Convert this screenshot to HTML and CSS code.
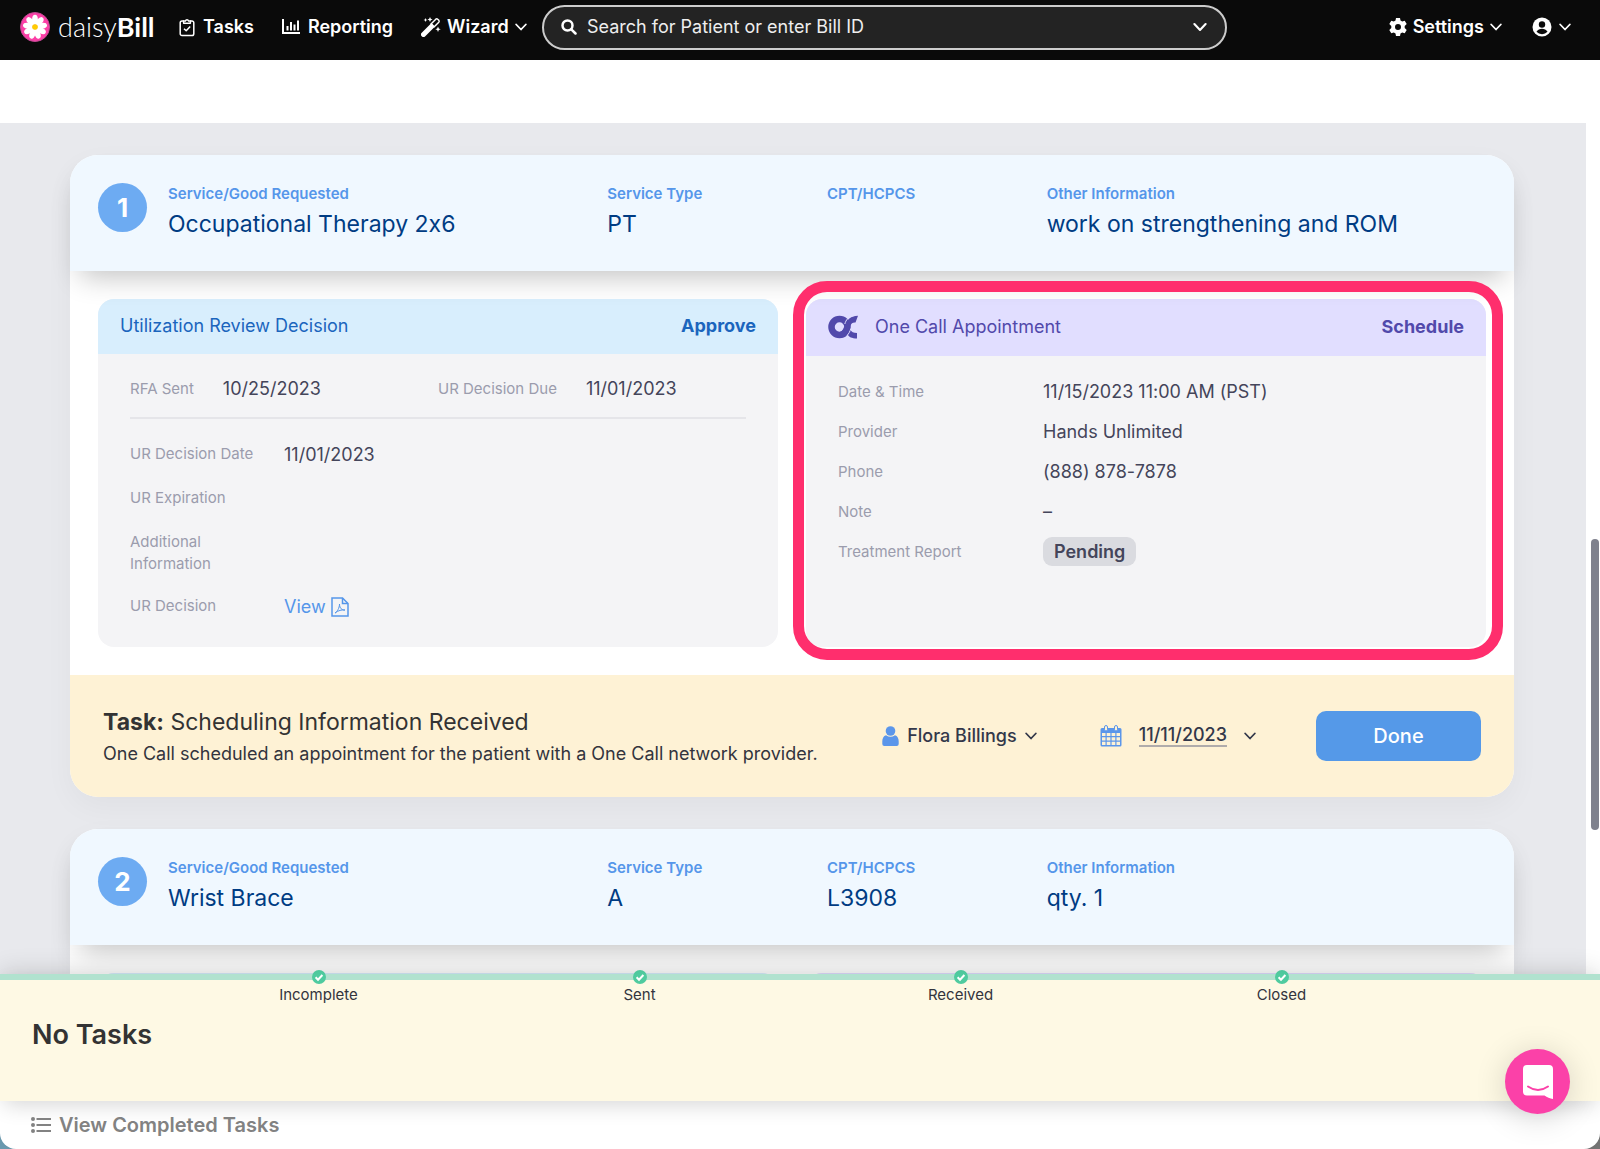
FILE: index.html
```html
<!DOCTYPE html>
<html lang="en">
<head>
  <meta charset="UTF-8" />
  <meta name="viewport" content="width=device-width, initial-scale=1.0"/>
  <title>daisyBill</title>
  <link rel="stylesheet" href="styles.css">
</head>
<body>
  <svg width="0" height="0" class="defs" aria-hidden="true">
    <symbol id="chevron" viewBox="0 0 12 12"><path d="M1.200 3.500 6 8.500l4.800-5" fill="none" stroke="currentColor" stroke-width="1.800" stroke-linecap="round" stroke-linejoin="round"/></symbol>
    <symbol id="check" viewBox="0 0 14 14"><circle cx="7" cy="7" r="7" fill="#4fcb9f"/><path d="M3.600 7.300 6 9.700l4.400-4.700" fill="none" stroke="#fff" stroke-width="2"/></symbol>
  </svg>

  <div class="app">
    <header class="navbar">
      <a href="#" class="brand">
        <svg class="brand-mark" viewBox="0 0 30 30">
          <circle cx="15" cy="15" r="14.500" fill="#fb3fa6" stroke="#c14a93"/>
          <g fill="#fff">
            <ellipse id="petal" cx="15" cy="7.800" rx="2.900" ry="5"/>
            <use href="#petal" transform="rotate(40 15 15)"/>
            <use href="#petal" transform="rotate(80 15 15)"/>
            <use href="#petal" transform="rotate(120 15 15)"/>
            <use href="#petal" transform="rotate(160 15 15)"/>
            <use href="#petal" transform="rotate(200 15 15)"/>
            <use href="#petal" transform="rotate(240 15 15)"/>
            <use href="#petal" transform="rotate(280 15 15)"/>
            <use href="#petal" transform="rotate(320 15 15)"/>
          </g>
          <circle cx="15" cy="15" r="2.800" fill="#fc0"/>
        </svg>
        <span class="brand-name">daisy<b>Bill</b></span>
      </a>
      <nav class="nav-links">
        <a href="#" class="nav-link nav-tasks">
          <svg width="16" height="20" viewBox="0 0 16 20" fill="none" stroke="#fff" stroke-width="1.500" stroke-linejoin="round"><path d="M5 4H3a1.800 1.800 0 0 0-1.800 1.800v11A1.800 1.800 0 0 0 3 18.600h10a1.800 1.800 0 0 0 1.800-1.800v-11A1.800 1.800 0 0 0 13 4h-2"/><path d="M4.600 6.300V4h1.800a1.700 1.700 0 0 1 3.200 0h1.800v2.300z"/><path d="m5 11.700 2.200 2.100 4-4.200"/></svg>
          Tasks
        </a>
        <a href="#" class="nav-link nav-reporting">
          <svg width="18" height="16" viewBox="0 0 18 16" fill="none" stroke="#fff" stroke-width="2"><path d="M1 0v14h17M5.500 7v4.500M9 3v8.500M12.500 5.500v6M16 1.500v10"/></svg>
          Reporting
        </a>
        <a href="#" class="nav-link nav-wizard">
          <svg width="20" height="20" viewBox="0 0 20 20"><path d="M2.500 17.500 10.500 9.500" stroke="#fff" stroke-width="5" stroke-linecap="round"/><path d="m10 7 4.800-4.800q1-.8 1.900 0l1.100 1.100q.8 1 0 1.900L13 10z" fill="none" stroke="#fff" stroke-width="1.500"/><path d="m9 0 .8 1.700 1.700.8-1.700.8L9 5l-.8-1.700-1.700-.8 1.700-.8zM17 9.500l.8 1.900 1.900.8-1.900.8-.8 1.900-.8-1.900-1.900-.8 1.900-.8zM4.500 1l.6 1.400 1.400.6-1.400.6L4.500 5l-.6-1.400L2.500 3l1.400-.6z" fill="#fff"/></svg>
          Wizard
          <svg class="chev" width="12" height="12"><use href="#chevron"/></svg>
        </a>
      </nav>
      <form class="search">
        <svg width="16" height="16" viewBox="0 0 16 16" fill="none" stroke="#fff" stroke-width="2.500" stroke-linecap="round"><circle cx="6.500" cy="6.500" r="5"/><path d="m10.300 10.300 4.200 4.200"/></svg>
        <input type="text" placeholder="Search for Patient or enter Bill ID" aria-label="Search for Patient or enter Bill ID">
        <button type="button" class="icon-button" aria-label="Search options"><svg width="14" height="14"><use href="#chevron"/></svg></button>
      </form>
      <div class="nav-account">
        <a href="#" class="nav-link nav-settings">
          <svg width="18" height="20" viewBox="0 0 18 20"><path fill="#fff" fill-rule="evenodd" d="M7 1h4l.5 2.600 1.700 1 2.500-.9 2 3.400-2 1.800v2.200l2 1.800-2 3.400-2.500-.9-1.700 1L11 19H7l-.5-2.600-1.700-1-2.500.9-2-3.400 2-1.800V8.900l-2-1.800 2-3.400 2.500.9 1.700-1zM9 7a3 3 0 1 0 0 6 3 3 0 0 0 0-6z"/></svg>
          Settings
          <svg class="chev" width="12" height="12"><use href="#chevron"/></svg>
        </a>
        <button type="button" class="icon-button user-button" aria-label="Account">
          <svg width="20" height="20" viewBox="0 0 20 20"><circle cx="10" cy="10" r="9.500" fill="#fff"/><circle cx="10" cy="7.500" r="3.200" fill="#0a0a0a"/><path d="M4.500 14.800a6.400 6.400 0 0 1 11 0 7.500 7.500 0 0 1-11 0z" fill="#0a0a0a"/></svg>
          <svg width="12" height="12"><use href="#chevron"/></svg>
        </button>
      </div>
    </header>

    <main class="content">
      <div class="page">
        <section class="card">
          <div class="card-head">
            <span class="badge">1</span>
            <dl class="summary">
              <div><dt>Service/Good Requested</dt><dd>Occupational Therapy 2x6</dd></div>
              <div><dt>Service Type</dt><dd>PT</dd></div>
              <div><dt>CPT/HCPCS</dt><dd></dd></div>
              <div><dt>Other Information</dt><dd>work on strengthening and ROM</dd></div>
            </dl>
          </div>

          <div class="card-body">
            <div class="panel panel-review">
              <div class="panel-head">
                <span>Utilization Review Decision</span>
                <b>Approve</b>
              </div>
              <div class="panel-body">
                <dl class="dates">
                  <div><dt>RFA Sent</dt><dd>10/25/2023</dd></div>
                  <div><dt>UR Decision Due</dt><dd>11/01/2023</dd></div>
                </dl>
                <dl class="fields">
                  <dt>UR Decision Date</dt><dd>11/01/2023</dd>
                  <dt>UR Expiration</dt><dd></dd>
                  <dt>Additional Information</dt><dd></dd>
                  <dt>UR Decision</dt>
                  <dd>
                    <a href="#" class="view-link">View
                      <svg width="18" height="20" viewBox="0 0 18 20" fill="none" stroke="currentColor"><path stroke-width="1.500" d="M1 1h10.500L17 6.500V19H1z"/><path stroke-width="1.500" d="M11.500 1v5.500H17"/><path d="M4 16c2-1 4.500-5 4.500-9 0 4 2.500 6.500 5.500 6-3-.5-7 .5-10 3z"/></svg>
                    </a>
                  </dd>
                </dl>
              </div>
            </div>

            <div class="panel panel-appointment">
              <div class="panel-head">
                <svg class="oc-logo" width="30" height="24" viewBox="0 0 30 24"><circle cx="11.500" cy="12" r="8" fill="none" stroke="#5149ab" stroke-width="6.500"/><path d="M30 .8 27.500 7.500C22 7 22.500 12 20.500 16.500 18.800 20 16 22.500 12 23V17c6-1 3-16 18-16.200zM22 14.500c1.500 2.500 3.500 3.500 7 3.500v5.500c-5 0-8.500-1.500-9.500-4.500z" fill="#5149ab"/><path d="M26 .6c-6 1.200-8 4.400-9.200 8.400M22.800 13.500c-.8 3-1.800 5-3.800 7" fill="none" stroke="#e1deff" stroke-width="1"/></svg>
                <span>One Call Appointment</span>
                <b>Schedule</b>
              </div>
              <dl class="panel-body appointment">
                <dt>Date &amp; Time</dt><dd>11/15/2023 11:00 AM (PST)</dd>
                <dt>Provider</dt><dd>Hands Unlimited</dd>
                <dt>Phone</dt><dd>(888) 878-7878</dd>
                <dt>Note</dt><dd>–</dd>
                <dt>Treatment Report</dt><dd><span class="pill">Pending</span></dd>
              </dl>
              <div class="highlight"></div>
            </div>
          </div>

          <div class="task">
            <div class="task-text">
              <h2><b>Task:</b> Scheduling Information Received</h2>
              <p>One Call scheduled an appointment for the patient with a One Call network provider.</p>
            </div>
            <button type="button" class="task-control assignee">
              <svg width="17" height="20" viewBox="0 0 17 20" fill="#5b96ea"><circle cx="8.500" cy="5" r="4.800"/><path d="M4 9.300c3 2 6 2 9 0 2.500.7 3.700 3 3.700 6V18a2 2 0 0 1-2 2H2.300a2 2 0 0 1-2-2v-2.700c0-3 1.200-5.300 3.700-6z"/></svg>
              Flora Billings
              <svg width="12" height="12"><use href="#chevron"/></svg>
            </button>
            <button type="button" class="task-control due">
              <svg width="22" height="22" viewBox="0 0 22 22"><path fill="#5b96ea" d="M2 3h18a1.500 1.500 0 0 1 1.500 1.500V20A1.500 1.500 0 0 1 20 21.500H2A1.500 1.500 0 0 1 .5 20V4.500A1.500 1.500 0 0 1 2 3z"/><path fill="#fef2d5" d="M2 8h3.500v3H2zm4.700 0h3.700v3H6.700zm4.900 0h3.700v3h-3.700zm4.900 0H20v3h-3.500zM2 12.200h3.500v3.300H2zm4.700 0h3.700v3.300H6.700zm4.900 0h3.700v3.300h-3.700zm4.900 0H20v3.300h-3.500zM2 16.700h3.500V20H2zm4.700 0h3.700V20H6.700zm4.900 0h3.700V20h-3.700zm4.900 0H20V20h-3.500z"/><g fill="#fef2d5" stroke="#5b96ea"><rect x="4.500" y=".5" width="3" height="5.500" rx="1.500"/><rect x="14.500" y=".5" width="3" height="5.500" rx="1.500"/></g></svg>
              <span class="due-date">11/11/2023</span>
              <svg width="12" height="12"><use href="#chevron"/></svg>
            </button>
            <button type="button" class="done">Done</button>
          </div>
        </section>

        <section class="card">
          <div class="card-head">
            <span class="badge">2</span>
            <dl class="summary">
              <div><dt>Service/Good Requested</dt><dd>Wrist Brace</dd></div>
              <div><dt>Service Type</dt><dd>A</dd></div>
              <div><dt>CPT/HCPCS</dt><dd>L3908</dd></div>
              <div><dt>Other Information</dt><dd>qty. 1</dd></div>
            </dl>
          </div>
          <div class="card-body">
            <div class="panel panel-review"><div class="panel-head"></div></div>
            <div class="panel panel-appointment"><div class="panel-head"></div></div>
          </div>
        </section>
      </div>
      <div class="scroll-thumb"></div>
    </main>

    <footer class="tasks-bar">
      <div class="tasks-panel">
        <ol class="steps">
          <li><svg width="14" height="14"><use href="#check"/></svg>Incomplete</li>
          <li><svg width="14" height="14"><use href="#check"/></svg>Sent</li>
          <li><svg width="14" height="14"><use href="#check"/></svg>Received</li>
          <li><svg width="14" height="14"><use href="#check"/></svg>Closed</li>
        </ol>
        <h2>No Tasks</h2>
      </div>
      <div class="completed">
        <a href="#">
          <svg width="20" height="16" viewBox="0 0 20 16" fill="#828282"><circle cx="2" cy="2" r="2"/><circle cx="2" cy="8" r="2"/><circle cx="2" cy="14" r="2"/><path d="M5.500 1H20v2H5.500zM5.500 7H20v2H5.500zM5.500 13H20v2H5.500z"/></svg>
          View Completed Tasks
        </a>
      </div>
      <button type="button" class="chat" aria-label="Open chat">
        <svg width="30" height="34" viewBox="0 0 30 34"><path d="M4 0h22a4 4 0 0 1 4 4v30c-3-.5-6-1.500-8.500-3.500H4a4 4 0 0 1-4-4V4a4 4 0 0 1 4-4z" fill="#fff"/><path d="M5 21.500q10 7 20 0" fill="none" stroke="#fb41a8" stroke-width="2" stroke-linecap="round"/></svg>
      </button>
    </footer>
  </div>
</body>
</html>
```
FILE: styles.css
```css
* {
  box-sizing: border-box;
}

html, body {
  margin: 0;
  padding: 0;
  height: 100%;
}

body {
  background: linear-gradient(to right, #6d9db3, #777);
  font-family: Inter, "Liberation Sans", sans-serif;
  font-size: 18px;
  line-height: 24px;
  font-variant-ligatures: no-contextual;
  color: #33343d;
}

.defs {
  position: absolute;
}

svg {
  display: block;
  flex: none;
}

dl, dd, h2, p, ol {
  margin: 0;
  padding: 0;
}

a {
  color: inherit;
  text-decoration: none;
}

button {
  border: 0;
  background: none;
  padding: 0;
  font: inherit;
  color: inherit;
  cursor: pointer;
}

.app {
  display: flex;
  flex-direction: column;
  height: 100vh;
  overflow: hidden;
}

/* top bar */
.navbar {
  display: flex;
  align-items: center;
  flex: none;
  height: 60px;
  padding: 0 29px 6px 20px;
  background: #0a0a0a;
  color: #fff;
}

.brand {
  display: flex;
  align-items: center;
  gap: 8px;
  width: 159px;
}

.brand-mark {
  width: 30px;
  height: 30px;
}

.brand-name {
  font-family: Lato, sans-serif;
  font-weight: 300;
  font-size: 27px;
}

.brand-name b {
  font-weight: 700;
}

.nav-links {
  display: flex;
  gap: 28px;
  width: 363px;
}

.nav-link {
  display: flex;
  align-items: center;
  gap: 8px;
  font-weight: 600;
}

.nav-wizard,
.nav-settings {
  gap: 6px;
}

.search {
  display: flex;
  align-items: center;
  gap: 10px;
  flex: 0 1 685px;
  height: 45px;
  padding: 0 18px 0 17px;
  border: 2px solid #ccc;
  border-radius: 23px;
  background: #232323;
}

.search input {
  flex: 1;
  border: 0;
  padding: 0;
  background: none;
  outline: none;
  color: #eee;
  font: inherit;
}

.search input::placeholder {
  color: #eee;
  opacity: 1;
}

.nav-account {
  display: flex;
  gap: 30px;
  margin-left: auto;
}

.icon-button {
  display: flex;
  align-items: center;
}

.user-button {
  gap: 7px;
}

/* page */
.content {
  position: relative;
  flex: 1;
  min-height: 0;
  padding: 63px 14px 0 0;
  background: #fff;
  overflow: hidden;
}

.page {
  padding: 32px 72px 0 70px;
  background: #e8e9ed;
}

.scroll-thumb {
  position: absolute;
  top: 479px;
  right: 1px;
  width: 8px;
  height: 291px;
  border-radius: 4px;
  background: #7f818d;
}

.card {
  margin-bottom: 32px;
  border-radius: 28px;
  background: #fff;
  box-shadow: 0 10px 30px rgba(0, 0, 0, 0.04);
}

.card-head {
  position: relative;
  z-index: 1;
  display: flex;
  gap: 21px;
  height: 116px;
  padding: 28px;
  border-radius: 28px 28px 0 0;
  background: #f0f8ff;
  box-shadow: 0 16px 28px -10px rgba(0, 0, 0, 0.24);
}

.badge {
  flex: none;
  width: 49px;
  height: 49px;
  border-radius: 50%;
  background: #6dabf2;
  color: #fff;
  font-size: 26px;
  font-weight: 700;
  line-height: 49px;
  text-align: center;
}

.summary {
  flex: 1;
  display: grid;
  grid-template-columns: 2fr 1fr 1fr 2fr;
}

.summary dt {
  line-height: 22px;
  font-size: 15px;
  font-weight: 600;
  color: #5596ea;
}

.summary dd {
  margin-top: 3px;
  font-size: 23px;
  line-height: 32px;
  color: #003c83;
  white-space: nowrap;
}

.card-body {
  display: grid;
  grid-template-columns: 1fr 1fr;
  gap: 28px;
  padding: 28px;
}

.panel {
  position: relative;
  border-radius: 16px;
  background: #f4f4f6;
}

.panel-head {
  display: flex;
  align-items: center;
  gap: 17px;
  height: 55px;
  padding: 0 22px 2px;
  border-radius: 16px 16px 0 0;
}

.panel-head b {
  margin-left: auto;
  font-weight: 700;
}

.panel-review .panel-head {
  background: #d8eefd;
  color: #1b65bd;
}

.panel-appointment .panel-head {
  height: 57px;
  background: #e1deff;
  color: #5149ab;
}

.panel-body {
  padding: 23px 32px 28px;
}

.panel dt {
  font-size: 15px;
  color: #9b9cad;
}

.panel dd {
  min-height: 24px;
  color: #44455a;
}

.dates {
  display: grid;
  grid-template-columns: 1fr 1fr;
  padding-bottom: 16px;
  border-bottom: 2px solid #e5e5e9;
}

.dates div {
  display: flex;
  gap: 29px;
}

.fields {
  display: grid;
  grid-template-columns: 132px 1fr;
  column-gap: 22px;
  row-gap: 20px;
  padding-top: 24px;
}

.fields dt {
  line-height: 22px;
}

.view-link {
  display: inline-flex;
  align-items: center;
  gap: 5px;
  color: #5596ea;
}

.appointment {
  display: grid;
  grid-template-columns: 205px 1fr;
  grid-auto-rows: 24px;
  row-gap: 16px;
  padding-top: 24px;
}

.pill {
  display: inline-block;
  margin: -3px 0;
  padding: 0 11px;
  border-radius: 9px;
  background: #dadbe0;
  font-weight: 600;
  line-height: 29px;
}

/* marker frame lying over the appointment panel */
.highlight {
  position: absolute;
  z-index: 2;
  inset: -18px -17px -13px -13px;
  border: 11px solid #ff2e6d;
  border-radius: 34px;
  pointer-events: none;
}

.task {
  display: flex;
  align-items: center;
  height: 122px;
  padding: 0 33px;
  border-radius: 0 0 28px 28px;
  background: #fef2d5;
}

.task-text {
  flex: 1;
}

.task-text h2 {
  font-size: 23px;
  font-weight: 400;
  line-height: 32px;
  color: #333;
}

.task-text p {
  margin-top: 4px;
}

.task-control {
  display: flex;
  align-items: center;
  gap: 8px;
  font-weight: 500;
  color: #33384a;
}

.assignee {
  margin-right: 63px;
}

.due {
  gap: 17px;
  margin-right: 60px;
}

.due-date {
  border-bottom: 2px solid #b0acab;
  line-height: 20px;
}

.done {
  width: 165px;
  height: 50px;
  border-radius: 10px;
  background: #5599e8;
  color: #fff;
  font-size: 20px;
  font-weight: 500;
}

/* bottom bar */
.tasks-bar {
  position: relative;
  flex: none;
  border-radius: 0 0 16px 16px;
  background: #fff;
  box-shadow: 0 -4px 24px rgba(0, 0, 0, 0.12);
}

.tasks-panel {
  position: relative;
  height: 127px;
  border-top: 6px solid #b1e2cf;
  background: #fef9e4;
  box-shadow: 0 8px 20px -4px rgba(0, 0, 0, 0.16);
}

.steps {
  display: grid;
  grid-template-columns: repeat(4, 1fr);
  margin-top: -10px;
  padding: 0 158px;
  list-style: none;
  font-size: 15px;
  line-height: 22px;
}

.steps li {
  display: flex;
  flex-direction: column;
  align-items: center;
}

.tasks-panel h2 {
  margin: 13px 32px 0;
  font-size: 27px;
  font-weight: 600;
  line-height: 32px;
  color: #333;
}

.completed {
  position: relative;
  display: flex;
  height: 48px;
  padding: 0 31px;
}

.completed a {
  display: flex;
  align-items: center;
  gap: 8px;
  font-size: 20px;
  font-weight: 600;
  color: #828282;
}

.chat {
  position: absolute;
  right: 30px;
  bottom: 35px;
  display: flex;
  align-items: center;
  justify-content: center;
  width: 65px;
  height: 65px;
  border-radius: 50%;
  background: #fb41a8;
  box-shadow: 0 4px 32px rgba(0, 0, 0, 0.16);
}
```
